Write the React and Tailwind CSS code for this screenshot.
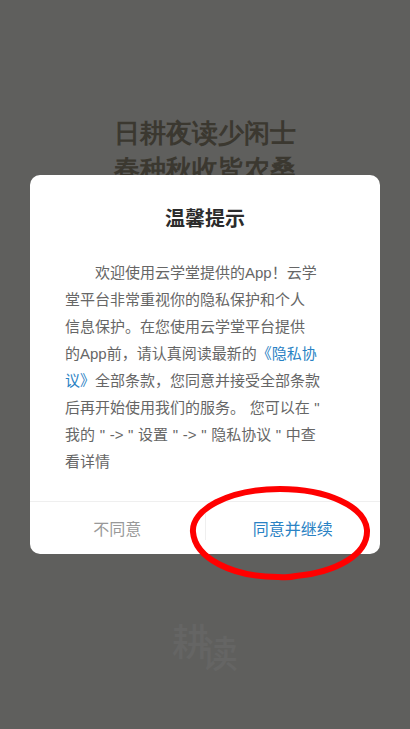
const cjk = { fontFamily: '"Liberation Sans", "Noto Sans CJK SC", sans-serif' };
const serif = { fontFamily: '"Liberation Serif", serif' };

const lines = [
  <span className="pl-[30px]">欢迎使用云学堂提供的App！云学</span>,
  <span>堂平台非常重视你的隐私保护和个人</span>,
  <span>信息保护。在您使用云学堂平台提供</span>,
  <span>的App前，请认真阅读最新的<span className="text-[#2a82c4]">《隐私协</span></span>,
  <span><span className="text-[#2a82c4]">议》</span>全部条款，您同意并接受全部条款</span>,
  <span>后再开始使用我们的服务。 您可以在 "</span>,
  <span>我的 " -&gt; " 设置 " -&gt; " 隐私协议 " 中查</span>,
  <span>看详情</span>,
];

export default function App() {
  return (
    <div className="relative w-[410px] h-[729px] overflow-hidden bg-[#5f5f5d]" style={cjk}>
      <div className="flex flex-col items-center h-full pt-[116px]">
        <div className="text-[26px] leading-[36px] font-bold text-[#3b3830] text-center" style={serif}>
          <div>日耕夜读少闲士</div>
          <div>春种秋收皆农桑</div>
        </div>
        <div className="mt-auto mb-[53px] flex items-start text-[37px] leading-[40px] font-medium text-[#656564]">
          <span>耕</span>
          <span className="-ml-[8px] mt-[12px]">读</span>
        </div>
      </div>

      <div className="absolute left-[30px] top-[175px] w-[350px] h-[379px] flex flex-col bg-white rounded-[10px] overflow-hidden">
        <h1 className="mt-[31px] text-[20px] leading-[26px] font-semibold text-center text-[#2b2b2b]">温馨提示</h1>
        <div className="mt-[27px] pl-[35px] flex flex-col text-[15px] leading-[27px] text-[#666666] whitespace-pre [word-spacing:0.5px]">
          {lines.map((l, i) => <div key={i}>{l}</div>)}
        </div>
        <div className="mt-auto h-[53px] flex border-t border-[#efefef] text-[16px]">
          <div className="flex-1 flex items-center justify-center pt-[4px] text-[#999999]">不同意</div>
          <div className="w-px mt-[11px] mb-[14px] bg-[#efefef]" />
          <div className="flex-1 flex items-center justify-center pt-[4px] text-[#2a82c4]">同意并继续</div>
        </div>
      </div>

      <svg className="absolute left-0 top-0 pointer-events-none" width="410" height="729" viewBox="0 0 410 729" fill="none">
        <path
          d="M193 532 C191 510 228 489 280 489 C326 489 365 506 367 530 C368 555 336 572 296 576 C288 578 284 577 278 577 C232 577 195 558 193 532 Z"
          stroke="#ff0000"
          strokeWidth="6"
          strokeLinejoin="round"
        />
      </svg>
    </div>
  );
}
